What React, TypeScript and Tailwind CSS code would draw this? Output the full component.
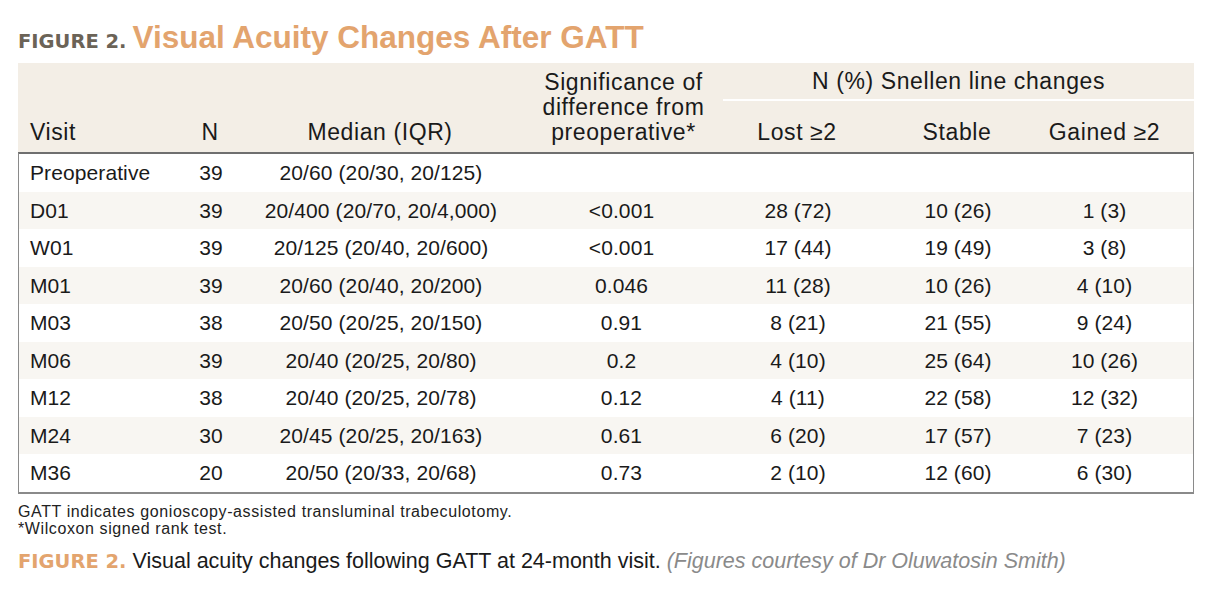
const rows = [
  ["Preoperative", "39", "20/60 (20/30, 20/125)", "", "", "", ""],
  ["D01", "39", "20/400 (20/70, 20/4,000)", "<0.001", "28 (72)", "10 (26)", "1 (3)"],
  ["W01", "39", "20/125 (20/40, 20/600)", "<0.001", "17 (44)", "19 (49)", "3 (8)"],
  ["M01", "39", "20/60 (20/40, 20/200)", "0.046", "11 (28)", "10 (26)", "4 (10)"],
  ["M03", "38", "20/50 (20/25, 20/150)", "0.91", "8 (21)", "21 (55)", "9 (24)"],
  ["M06", "39", "20/40 (20/25, 20/80)", "0.2", "4 (10)", "25 (64)", "10 (26)"],
  ["M12", "38", "20/40 (20/25, 20/78)", "0.12", "4 (11)", "22 (58)", "12 (32)"],
  ["M24", "30", "20/45 (20/25, 20/163)", "0.61", "6 (20)", "17 (57)", "7 (23)"],
  ["M36", "20", "20/50 (20/33, 20/68)", "0.73", "2 (10)", "12 (60)", "6 (30)"],
];

const cols = "grid grid-cols-[142px_100px_250px_213px_148px_172px_151px]";

export default function App() {
  return (
    <div className="w-[1212px] h-[600px] bg-white px-[18px] pt-[22px] text-[#1a1a1a] font-['Liberation_Sans',Arial,sans-serif]">
      {/* Title */}
      <h2 className="flex items-baseline gap-[6px] leading-none h-[41px]">
        <span className="text-[19.5px] font-bold text-[#6b6357] font-['DejaVu_Sans',sans-serif]">
          FIGURE 2.
        </span>
        <span className="text-[31.5px] font-bold text-[#e3a46e]">
          Visual Acuity Changes After GATT
        </span>
      </h2>

      {/* Header */}
      <div className="flex bg-[#f3eee6] h-[89px] text-[23px] leading-[25px] tracking-[0.6px]">
        <div className="w-[142px] flex items-end pl-[12px] pb-[7px]">Visit</div>
        <div className="w-[100px] flex items-end justify-center pb-[7px]">N</div>
        <div className="w-[250px] flex items-end justify-center pb-[7px] pr-[10px]">Median (IQR)</div>
        <div className="w-[213px] flex items-end justify-center text-center pb-[7px] pl-[14px]">
          Significance of
          <br />
          difference from
          <br />
          preoperative*
        </div>
        <div className="w-[471px] flex flex-col">
          <div className="h-[38px] flex items-center justify-center border-b-2 border-white">
            N (%) Snellen line changes
          </div>
          <div className="flex-1 grid grid-cols-[148px_172px_151px] items-end pb-[7px]">
            <div className="text-center">Lost ≥2</div>
            <div className="text-center">Stable</div>
            <div className="text-center pr-[28px]">Gained ≥2</div>
          </div>
        </div>
      </div>

      {/* Body */}
      <div className="border-t-2 border-t-[#6f6f6f] border-x border-b-2 border-[#8a8a8a] text-[21px] tracking-[0.1px]">
        {rows.map((r, i) => (
          <div
            key={r[0]}
            className={`${cols} h-[37.5px] items-center ${i % 2 === 1 ? "bg-[#f8f6f2]" : "bg-white"}`}
          >
            <div className="pl-[11px]">{r[0]}</div>
            <div className="text-center">{r[1]}</div>
            <div className="text-center pr-[10px]">{r[2]}</div>
            <div className="text-center pl-[8px]">{r[3]}</div>
            <div className="text-center">{r[4]}</div>
            <div className="text-center">{r[5]}</div>
            <div className="text-center pr-[30px]">{r[6]}</div>
          </div>
        ))}
      </div>

      {/* Footnotes */}
      <div className="mt-[9px] text-[16px] leading-[17px] tracking-[0.6px] text-[#222]">
        <p>GATT indicates gonioscopy-assisted transluminal trabeculotomy.</p>
        <p>*Wilcoxon signed rank test.</p>
      </div>

      {/* Caption */}
      <p className="mt-[14px] text-[21.5px] leading-none">
        <span className="text-[19.5px] font-bold text-[#e3a46e] font-['DejaVu_Sans',sans-serif]">
          FIGURE 2.
        </span>{" "}
        Visual acuity changes following GATT at 24-month visit.{" "}
        <span className="italic text-[#8a8a8a]">(Figures courtesy of Dr Oluwatosin Smith)</span>
      </p>
    </div>
  );
}
